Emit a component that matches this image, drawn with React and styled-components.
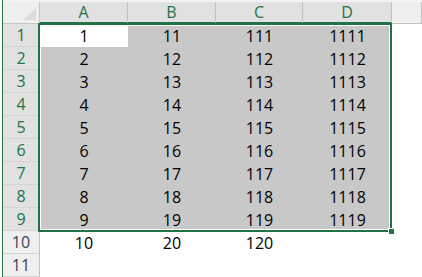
import styled, { createGlobalStyle } from "styled-components";

const GREEN = "#217346";

const GlobalStyle = createGlobalStyle`
  body {
    margin: 0;
    background: #fff;
    font-family: "Open Sans", "Liberation Sans", Arial, sans-serif;
  }
`;

const Frame = styled.div`
  margin-left: 2px;
  border-left: 1px solid ${GREEN};
  height: 277px;
  overflow: hidden;
  display: flex;
  flex-direction: column;
`;

const TopStrip = styled.div`
  height: 3px;
  background: #f3f3f3;
`;

const Sheet = styled.div`
  position: relative;
  display: grid;
  grid-template-columns: 37px 88px 88px 87px 89px 1fr;
  grid-template-rows: 22px;
  grid-auto-rows: 23px;
`;

const Corner = styled.div`
  box-sizing: border-box;
  background: #efefef;
  border-right: 1px solid #c6c6c6;
  border-bottom: 1px solid #c6c6c6;
  display: flex;
  align-items: flex-end;
  justify-content: flex-end;
  padding: 0 3px 3px 0;
`;

const ColHead = styled.div`
  box-sizing: border-box;
  display: flex;
  align-items: center;
  justify-content: center;
  font-size: 16px;
  line-height: 1;
  background: ${(p) => (p.$selected ? "#e1e1e1" : "#efefef")};
  color: ${(p) => (p.$selected ? GREEN : "#444")};
  border-right: 1px solid #c0c0c0;
  border-bottom: ${(p) =>
    p.$selected ? `2px solid ${GREEN}` : "1px solid #c0c0c0"};
`;

const RowHead = styled.div`
  box-sizing: border-box;
  display: flex;
  align-items: center;
  justify-content: center;
  font-size: 16px;
  line-height: 1;
  background: ${(p) => (p.$selected ? "#e1e1e1" : "#efefef")};
  color: ${(p) => (p.$selected ? GREEN : "#3f3f5a")};
  border-right: 1px solid #c0c0c0;
  border-bottom: 1px solid #d4d4d4;
`;

const Cell = styled.div`
  display: flex;
  align-items: center;
  justify-content: center;
  font-size: 16px;
  line-height: 1;
  color: #000;
  background: ${(p) => (p.$filled && !p.$active ? "#c8c8c8" : "#fff")};
`;

const Selection = styled.div`
  position: absolute;
  left: 35px;
  top: 21px;
  width: 354px;
  height: 209px;
  box-sizing: border-box;
  border: 2px solid ${GREEN};
  box-shadow: inset 0 0 0 1px #fff;
  pointer-events: none;
`;

const Handle = styled.div`
  position: absolute;
  right: -5px;
  bottom: -5px;
  width: 7px;
  height: 7px;
  box-sizing: border-box;
  background: ${GREEN};
  border: 1px solid #fff;
`;

const cols = ["A", "B", "C", "D"];

const rows = [];
for (let i = 1; i <= 9; i++) {
  rows.push({ n: i, cells: [i, 10 + i, 110 + i, 1110 + i], selected: true });
}
rows.push({ n: 10, cells: [10, 20, 120, ""], selected: false });
rows.push({ n: 11, cells: ["", "", "", ""], selected: false });

export default function App() {
  return (
    <>
      <GlobalStyle />
      <Frame>
        <TopStrip />
        <Sheet>
          <Corner>
            <svg width="13" height="12" viewBox="0 0 13 12">
              <polygon points="13,0 13,12 0,12" fill="#dcdcdc" />
            </svg>
          </Corner>
          {cols.map((c) => (
            <ColHead key={c} $selected>
              {c}
            </ColHead>
          ))}
          <ColHead />
          {rows.map((r) => (
            <Row key={r.n} row={r} />
          ))}
          <Selection>
            <Handle />
          </Selection>
        </Sheet>
      </Frame>
    </>
  );
}

function Row({ row }) {
  return (
    <>
      <RowHead $selected={row.selected}>{row.n}</RowHead>
      {row.cells.map((v, i) => (
        <Cell
          key={i}
          $filled={row.selected}
          $active={row.n === 1 && i === 0}
        >
          {v}
        </Cell>
      ))}
      <Cell />
    </>
  );
}
